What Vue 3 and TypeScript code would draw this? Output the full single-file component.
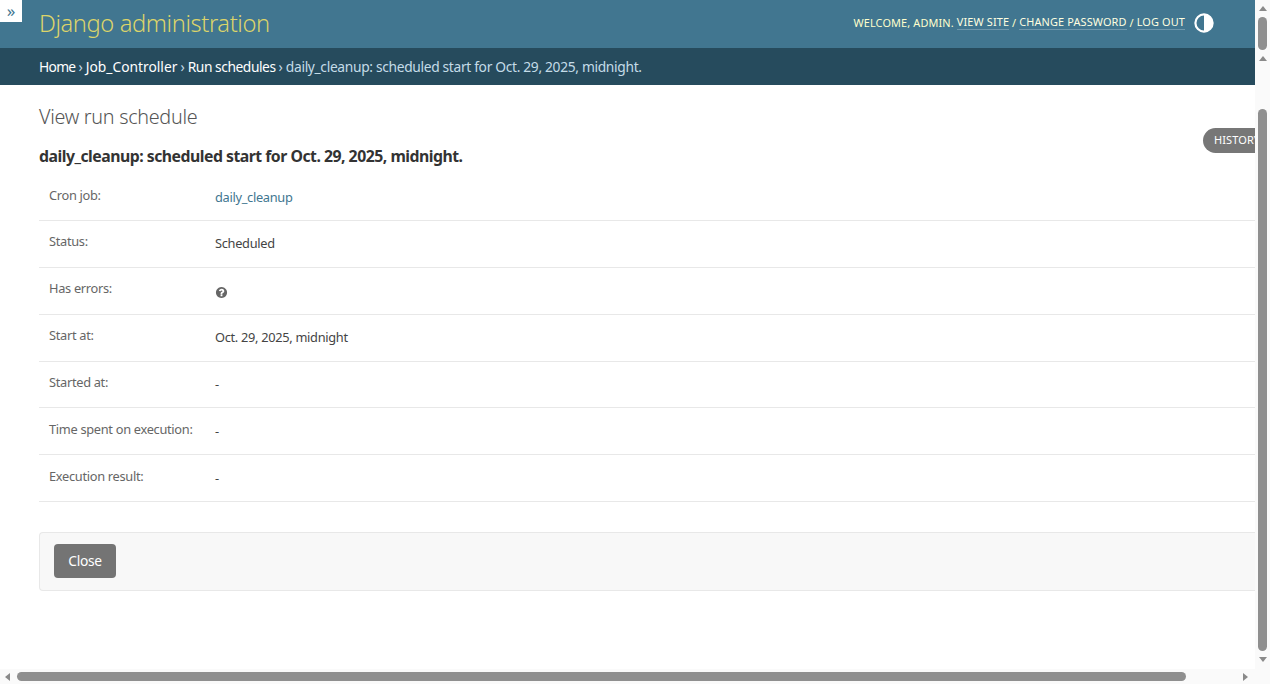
<script setup lang="ts">
// Django admin "view run schedule" page, read-only object view
const rows: { label: string; value: string; link?: boolean; unknown?: boolean }[] = [
  { label: 'Cron job:', value: 'daily_cleanup', link: true },
  { label: 'Status:', value: 'Scheduled' },
  { label: 'Has errors:', value: '', unknown: true },
  { label: 'Start at:', value: 'Oct. 29, 2025, midnight' },
  { label: 'Started at:', value: '-' },
  { label: 'Time spent on execution:', value: '-' },
  { label: 'Execution result:', value: '-' },
]
</script>

<template>
  <div class="window">
    <div class="middle">
      <div class="page">
        <button class="nav-toggle" aria-label="Toggle navigation">»</button>

        <header class="header">
          <a class="branding">Django administration</a>
          <div class="user-tools">
            <span>Welcome, <strong>admin</strong>.</span>
            <a>View site</a> / <a>Change password</a> / <a>Log out</a>
            <svg class="theme" viewBox="0 0 20 20" aria-hidden="true">
              <circle cx="10" cy="10" r="8.6" fill="none" stroke="#fff" stroke-width="2.2" />
              <path d="M10 1.4a8.6 8.6 0 0 1 0 17.2z" fill="#fff" />
            </svg>
          </div>
        </header>

        <nav class="breadcrumbs">
          <a class="crumb-home">Home</a><i>›</i><a>Job_Controller</a><i>›</i><a class="crumb-run">Run schedules</a><i>›</i><span>daily_cleanup: scheduled start for Oct. 29, 2025, midnight.</span>
        </nav>

        <main class="content">
          <h1>View run schedule</h1>
          <a class="history">History</a>
          <h2>daily_cleanup: scheduled start for Oct. 29, 2025, midnight.</h2>

          <div class="fieldset">
            <div v-for="row in rows" :key="row.label" class="form-row">
              <label>{{ row.label }}</label>
              <div class="readonly">
                <a v-if="row.link">{{ row.value }}</a>
                <svg v-else-if="row.unknown" class="unknown" viewBox="0 0 1792 1792" aria-hidden="true">
                  <path fill="#666" d="M1024 1376v-192q0-14-9-23t-23-9h-192q-14 0-23 9t-9 23v192q0 14 9 23t23 9h192q14 0 23-9t9-23zm256-672q0-88-55.5-163t-138.5-116-170-41q-243 0-371 213-15 24 8 42l132 100q7 6 19 6 16 0 25-12 53-68 86-92 34-24 86-24 48 0 85.5 26t37.5 59q0 38-20 61t-68 45q-63 28-115.5 86.5t-52.5 125.5v36q0 14 9 23t23 9h192q14 0 23-9t9-23q0-19 21.5-49.5t54.5-49.5q32-18 49-28.5t46-35 44.5-48 28-60.5 12.5-81zm384 192q0 209-103 385.5t-279.5 279.5-385.5 103-385.5-103-279.5-279.5-103-385.5 103-385.5 279.5-279.5 385.5-103 385.5 103 279.5 279.5 103 385.5z" />
                </svg>
                <template v-else>{{ row.value }}</template>
              </div>
            </div>
          </div>

          <div class="submit-row">
            <a class="closelink">Close</a>
          </div>
        </main>
      </div>

      <div class="vbar">
        <span class="arrow up"></span>
        <span class="thumb-top"></span>
        <span class="arrow up second"></span>
        <span class="thumb-main"></span>
        <span class="arrow down"></span>
      </div>
    </div>

    <div class="hbar">
      <span class="arrow left"></span>
      <span class="thumb-h"></span>
      <span class="arrow right"></span>
    </div>
  </div>
</template>

<style>
html, body { margin: 0; background: #fff; overflow: hidden; }
</style>

<style scoped>
.window {
  width: 1270px;
  height: 684px;
  display: flex;
  flex-direction: column;
  font-family: "Noto Sans", "Open Sans", sans-serif;
  color: #333;
  background: #fff;
}
.middle { flex: 1; display: flex; min-height: 0; }
.page { position: relative; width: 1255px; overflow: hidden; }

.nav-toggle {
  position: absolute;
  left: 0;
  top: 0;
  width: 22px;
  height: 22px;
  padding: 0;
  border: 0;
  background: #fff;
  color: #417690;
  font: 17px/20px "Noto Sans", sans-serif;
}

.header {
  height: 48px;
  background: #417690;
  display: flex;
  align-items: center;
  justify-content: space-between;
  padding: 0 41px 2px 39px;
  box-sizing: border-box;
}
.branding { font-size: 23.7px; font-weight: 300; color: #dcd46a; letter-spacing: -0.4px; }
.user-tools {
  display: flex;
  align-items: center;
  margin-bottom: 2px;
  font-size: 10.9px;
  letter-spacing: 0.14px;
  text-transform: uppercase;
  color: #ffc;
  white-space: pre;
}
.user-tools strong { font-weight: 400; }
.user-tools a { color: #ffffe0; border-bottom: 1px solid rgba(255, 255, 255, 0.25); }
.user-tools span { margin-right: 3px; }
.theme { width: 20px; height: 20px; margin: 2px 0 0 9px; }

.breadcrumbs {
  height: 37px;
  background: #264b5d;
  display: flex;
  align-items: center;
  padding-left: 39px;
  font-size: 13.8px;
  color: #c4dce8;
  white-space: nowrap;
}
.breadcrumbs a { color: #fff; }
.breadcrumbs span { letter-spacing: -0.33px; }
.breadcrumbs .crumb-home { letter-spacing: -0.7px; }
.breadcrumbs .crumb-run { letter-spacing: -0.45px; }
.breadcrumbs i { font-style: normal; margin: 0 3px; }

.content { padding: 19px 0 0 39px; }
h1 {
  margin: 0 0 0;
  padding-top: 1px;
  font-size: 19.8px;
  line-height: 24px;
  font-weight: 300;
  color: #555;
  letter-spacing: -0.3px;
}
h2 {
  margin: 17px 0 0;
  font-size: 15.8px;
  line-height: 20px;
  font-weight: 700;
  color: #333;
  letter-spacing: -0.5px;
}
.history {
  position: absolute;
  left: 1203px;
  top: 128px;
  width: 90px;
  height: 25px;
  padding-left: 11px;
  box-sizing: border-box;
  border-radius: 13px;
  background: #777;
  color: #fff;
  font-size: 11px;
  line-height: 24px;
  letter-spacing: 0.1px;
  text-transform: uppercase;
}

.fieldset { margin-top: 8px; }
.form-row {
  display: flex;
  height: 46.9px;
  box-sizing: border-box;
  border-bottom: 1px solid #e8e8e8;
  padding: 12.5px 0 0 10px;
}
label { width: 166px; flex: none; font-size: 12.8px; line-height: 17px; color: #666; letter-spacing: -0.3px; }
.readonly { font-size: 12.8px; line-height: 17px; padding-top: 2px; letter-spacing: -0.3px; color: #444; }
.readonly a { color: #417690; }
.unknown { display: block; width: 13px; height: 13px; margin-top: 4px; }

.submit-row {
  margin-top: 30px;
  height: 59px;
  box-sizing: border-box;
  border: 1px solid #e8e8e8;
  border-right: 0;
  border-radius: 4px 0 0 4px;
  background: #f8f8f8;
  padding: 11px 14px;
}
.closelink {
  display: block;
  width: 62px;
  height: 34px;
  border-radius: 4px;
  background: #747474;
  color: #fff;
  font-size: 13.8px;
  line-height: 33px;
  text-align: center;
  letter-spacing: -0.3px;
}

.vbar {
  width: 15px;
  display: flex;
  flex-direction: column;
  align-items: center;
  background: #fafafa;
}
.arrow { width: 0; height: 0; border: 4px solid transparent; flex: none; }
.arrow.up { border-top: 0; border-bottom: 5px solid #8a8a8a; margin-top: 6px; }
.arrow.up.second { margin-top: 6px; }
.arrow.down { border-bottom: 0; border-top: 5px solid #8a8a8a; margin-top: 6px; }
.thumb-top, .thumb-main { width: 9px; background: #8f8f8f; border-radius: 5px; flex: none; }
.thumb-top { height: 33px; margin-top: 6px; }
.thumb-main { height: 542px; margin-top: 48px; }

.hbar {
  height: 15px;
  display: flex;
  align-items: center;
  background: #fafafa;
  padding-left: 5px;
}
.arrow.left { border-left: 0; border-right: 5px solid #8a8a8a; }
.arrow.right { border-right: 0; border-left: 5px solid #8a8a8a; margin-left: 57px; }
.thumb-h { width: 1169px; height: 9px; margin-left: 7px; border-radius: 5px; background: #8f8f8f; }
</style>
